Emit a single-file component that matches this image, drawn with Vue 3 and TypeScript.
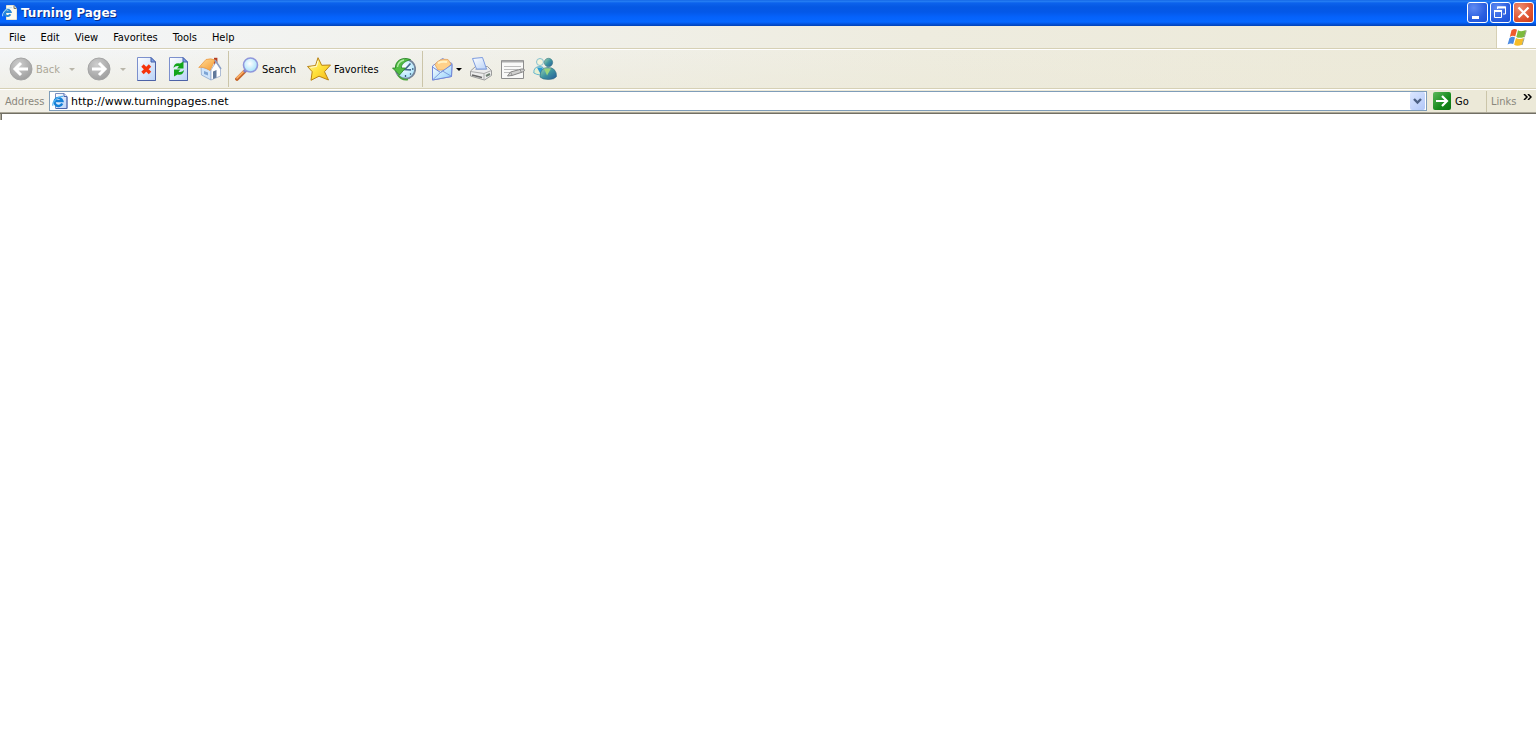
<script setup lang="ts">
import { ref } from 'vue'

const menus: string[] = ['File', 'Edit', 'View', 'Favorites', 'Tools', 'Help']
const address = ref<string>('http://www.turningpages.net')
</script>

<template>
  <div class="window">
    <svg class="defs" aria-hidden="true">
      <defs>
        <linearGradient id="paper" x1="0" y1="0" x2="1" y2="1">
          <stop offset="0" stop-color="#ffffff" /><stop offset="1" stop-color="#b9d2f7" />
        </linearGradient>
        <radialGradient id="disc" cx=".4" cy=".3" r=".75">
          <stop offset="0" stop-color="#cecece" /><stop offset="1" stop-color="#9c9c9c" />
        </radialGradient>
        <linearGradient id="roof" x1="0" y1="0" x2="1" y2="1">
          <stop offset="0" stop-color="#ffdc98" /><stop offset="1" stop-color="#f59a32" />
        </linearGradient>
        <radialGradient id="lens" cx=".45" cy=".4" r=".6">
          <stop offset="0" stop-color="#ffffff" /><stop offset="1" stop-color="#a5e2fb" />
        </radialGradient>
        <linearGradient id="gold" x1="0" y1="0" x2="1" y2="1">
          <stop offset="0" stop-color="#fffbb0" /><stop offset=".5" stop-color="#ffe23c" /><stop offset="1" stop-color="#f5b51a" />
        </linearGradient>
        <linearGradient id="teal" x1="0" y1="0" x2="1" y2="1">
          <stop offset="0" stop-color="#9fd6b0" /><stop offset=".5" stop-color="#3e94a0" /><stop offset="1" stop-color="#25599b" />
        </linearGradient>
        <linearGradient id="envelope" x1="0" y1="0" x2="1" y2="1">
          <stop offset="0" stop-color="#ffffff" /><stop offset="1" stop-color="#8fd0fb" />
        </linearGradient>
        <symbol id="ie" viewBox="0 0 16 16">
          <path d="M3.500.5h8.500l3 3v12H3.500z" fill="url(#paper)" stroke="#7a8fc0" />
          <path d="M12 .5v3h3" fill="#dce6fa" stroke="#4d66ae" />
          <path d="M15 4v11.500H4" fill="none" stroke="#4d66ae" />
          <path d="M10.200 10.500a4 4 0 1 1 .2-2.400H4" fill="none" stroke="#1681d8" stroke-width="2.400" />
          <path d="M1 12.700C-.5 9.200 6.300 2.600 11.300 3.500" fill="none" stroke="#58b4f0" stroke-width="1.200" />
        </symbol>
      </defs>
    </svg>

    <header class="title-bar">
      <svg class="app-icon" viewBox="0 0 16 16" aria-hidden="true">
        <path d="M4.500.5H12l2.500 3v11h-10z" fill="#fbfaf1" stroke="#e4e3d4" />
        <path d="M12 .5v3h2.500" fill="#dcd9c8" stroke="#77776a" />
        <path d="M8.400 9.300a3.200 3.200 0 1 1 .3-2.300H3" fill="none" stroke="#2a8ad8" stroke-width="2" />
        <path d="M.8 11.300C-.5 8 4.500 2.500 9.800 2.500" fill="none" stroke="#b8e3ff" />
      </svg>
      <h1>Turning Pages</h1>
      <div class="window-buttons">
        <button class="caption" type="button" aria-label="Minimize">
          <svg viewBox="0 0 21 21"><path d="M5 15.500h7" stroke="#fff" stroke-width="3" /></svg>
        </button>
        <button class="caption" type="button" aria-label="Restore">
          <svg viewBox="0 0 21 21" fill="none" stroke="#fff">
            <path d="M7.500 7V5h8v7H13" /><path d="M7 5.500h9" stroke-width="2" />
            <path d="M4.500 9.500h7v6h-7z" /><path d="M4 9h8" stroke-width="2" />
          </svg>
        </button>
        <button class="caption close" type="button" aria-label="Close">
          <svg viewBox="0 0 21 21"><path d="m5.500 5.500 10 10m0-10-10 10" stroke="#fff" stroke-width="2.200" /></svg>
        </button>
      </div>
    </header>

    <nav class="menu-bar" aria-label="Menu">
      <div class="menus">
        <button v-for="menu in menus" :key="menu" type="button">{{ menu }}</button>
      </div>
      <div class="flag-box">
        <svg class="flag" viewBox="0 0 20 19" aria-hidden="true">
          <path d="M4.500 2.300Q7.500.2 10 1.800L8.200 8.400Q5.600 7 2.800 8.900z" fill="#ef5a2c" />
          <path d="M11 2.300q3 2 8-.2l-2 6.800q-4.500 1.900-7.700 0z" fill="#7dba3c" />
          <path d="M2.500 9.900Q5.500 8 8 9.400L6.200 16Q3.600 14.600.6 16.500z" fill="#4a8ae2" />
          <path d="M9 10q3.200 2 7.700.1l-1.900 6.700q-4.500 2-7.700-.1z" fill="#f7bd28" />
          <path d="m19.300 2.500-2 6.800m-.2 1-2 6.700" fill="none" stroke="#5d6a45" stroke-width=".6" />
        </svg>
      </div>
    </nav>

    <div class="toolbar" role="toolbar" aria-label="Standard buttons">
      <button class="tool back muted" type="button">
        <svg class="icon" viewBox="0 0 24 24" aria-hidden="true">
          <circle cx="12" cy="12" r="11" fill="url(#disc)" stroke="#a5a5a5" />
          <path d="M19 12H6m6-6-6 6 6 6" fill="none" stroke="#fff" stroke-width="3" />
        </svg>
        <span>Back</span><i class="caret"></i>
      </button>
      <button class="tool forward muted" type="button" aria-label="Forward">
        <svg class="icon" viewBox="0 0 24 24" aria-hidden="true">
          <circle cx="12" cy="12" r="11" fill="url(#disc)" stroke="#a5a5a5" />
          <path d="M5 12h13m-6-6 6 6-6 6" fill="none" stroke="#fff" stroke-width="3" />
        </svg>
        <i class="caret"></i>
      </button>
      <button class="tool single" type="button" aria-label="Stop">
        <svg class="icon" viewBox="0 0 24 24" aria-hidden="true">
          <path d="M3.500.5H17l4.500 4.500v18.500h-18z" fill="url(#paper)" stroke="#7c90cd" />
          <path d="M17 .5V5h4.500z" fill="#7da2ea" stroke="#4660a8" />
          <path d="M21.500 5v18.500h-18" fill="none" stroke="#4c62a6" />
          <path d="m8.500 8.500 7.500 7.500m0-7.500-7.500 7.500" stroke="#f5330b" stroke-width="3.400" />
        </svg>
      </button>
      <button class="tool single" type="button" aria-label="Refresh">
        <svg class="icon" viewBox="0 0 24 24" aria-hidden="true">
          <path d="M3.500.5H17l4.500 4.500v18.500h-18z" fill="url(#paper)" stroke="#7c90cd" />
          <path d="M17 .5V5h4.500z" fill="#7da2ea" stroke="#4660a8" />
          <path d="M21.500 5v18.500h-18" fill="none" stroke="#4c62a6" />
          <path d="M7.500 11Q8 5.300 14 6.500L17.500 4.500V11.500H11L13 9.300Q9.500 8.500 7.500 11z" fill="#12a51b" />
          <path d="M18 13Q17.500 18.700 11.500 17.500L8 19.500V12.500H14.500L12.500 14.700Q16 15.500 18 13z" fill="#12a51b" />
        </svg>
      </button>
      <button class="tool home" type="button" aria-label="Home">
        <svg class="icon" viewBox="0 0 24 24" aria-hidden="true">
          <path d="M16 .8h3.400v7H16z" fill="#b43c22" />
          <path d="m3 10 10 3v10l-9.500-5z" fill="#cfe4fa" stroke="#8ca7cf" stroke-width=".8" />
          <path d="m13 13 5-8 4.500 6v8L13 23z" fill="#fff" stroke="#9aaccb" stroke-width=".8" />
          <path d="m15 14.500 3.500-1.500v7.500L15 22z" fill="#61799b" /><path d="m6 14 4 1.500v3L6 17z" fill="#7da4d4" />
          <path d="M.8 10.500 8 2.500Q13 1 17 3l-5 10.500Q5 9 .8 10.500z" fill="url(#roof)" stroke="#eb9a46" stroke-width=".8" />
          <path d="m17 3 6 9" fill="none" stroke="#8ba0c6" stroke-width="1.500" />
        </svg>
      </button>
      <span class="separator"></span>
      <button class="tool search" type="button">
        <svg class="icon" viewBox="0 0 24 24" aria-hidden="true">
          <path d="m10 14-8 8" stroke="#c5662c" stroke-width="3.800" stroke-linecap="round" />
          <path d="m9 14-7 7" stroke="#ffb266" stroke-width="1.700" stroke-linecap="round" />
          <path d="m11 13-2 2" stroke="#7f82cb" stroke-width="3" />
          <circle cx="15.500" cy="8" r="7" fill="url(#lens)" stroke="#9097db" stroke-width="1.600" />
        </svg>
        <span>Search</span>
      </button>
      <button class="tool favorites" type="button">
        <svg class="icon" viewBox="0 0 24 24" aria-hidden="true">
          <path d="M11 .7 14.700 8.300 23.500 8l-6 6.700L21.500 23 12 19.200 4 23.300 5.200 14.700.5 9.500l8-1z" fill="url(#gold)" stroke="#b98316" stroke-linejoin="round" />
          <path d="m11 4-1.500 5.500-6 .8" fill="none" stroke="#fffddb" />
        </svg>
        <span>Favorites</span>
      </button>
      <button class="tool history" type="button" aria-label="History">
        <svg class="icon" viewBox="0 0 24 24" aria-hidden="true">
          <circle cx="13.500" cy="12" r="9.700" fill="url(#lens)" stroke="#76859a" stroke-width="1.800" />
          <path d="M20 12h1.500M13.500 18v2M18 16.500l1 1" fill="none" stroke="#3a5979" stroke-width="1.300" />
          <path d="m18.500 6.500-5.500 6 6 .3" fill="none" stroke="#456a90" stroke-width="1.700" />
          <path d="M18.500 2.500C10-.8 3 4 3.500 11H.5l7 7 6-7H9.500c-.5-4 3-6.500 9-8.500z" fill="#51bd44" stroke="#268422" stroke-width=".8" />
          <path d="M5.500 10Q6 4.500 12 3" fill="none" stroke="#b4eaa6" stroke-width="1.300" />
          <path d="M6 18q3.500 5.500 10 4.500" fill="none" stroke="#4ba63c" stroke-width="1.500" />
        </svg>
      </button>
      <span class="separator wide"></span>
      <button class="tool mail" type="button" aria-label="Mail">
        <svg class="icon" viewBox="0 0 24 24" aria-hidden="true">
          <path d="m2.500 9 10-7.500L22 6.500l-.5 13-19 3.500z" fill="url(#envelope)" stroke="#7388d8" stroke-linejoin="round" />
          <path d="M5 7.500Q9 1 18 2.500l3 4.500-5 6H8z" fill="#ffd18a" stroke="#e4a35f" stroke-width=".8" />
          <path d="M8 6q4-2 9-1" fill="none" stroke="#fff2c4" stroke-width="2" />
          <path d="m2.500 10 8 5.500L22 7.500l-.5 12-19 3.500z" fill="url(#envelope)" stroke="#7388d8" stroke-linejoin="round" />
          <path d="m3 22.500 7.500-7 2-1.500 8.500 5" fill="none" stroke="#7f9ddd" />
        </svg>
        <i class="caret dark"></i>
      </button>
      <button class="tool single" type="button" aria-label="Print">
        <svg class="icon" viewBox="0 0 24 24" aria-hidden="true">
          <path d="m1.500 14 5-4.500h12l4 4v5l-7 4.500-14-4z" fill="#ececec" stroke="#9c9c9c" stroke-linejoin="round" />
          <path d="m6 13 2-2.500h9l1.500 2z" fill="#a8b8cf" />
          <path d="m3.500 1.500 10-1 4 11.500H7.500z" fill="url(#paper)" stroke="#7c9bdf" />
          <path d="m1.500 14.500 13.500 2 7.500-3M15 16.500V23" fill="none" stroke="#aaa" />
          <path d="m3 18 10 2.500" stroke="#666" stroke-width="1.500" />
          <path d="m17 19 4-2" stroke="#6f7f72" stroke-width="2" />
        </svg>
      </button>
      <button class="tool single" type="button" aria-label="Edit">
        <svg class="icon" viewBox="0 0 24 24" aria-hidden="true">
          <path d="M.5 3.500h22v18H.5z" fill="#f9f9f8" stroke="#8d8d8d" />
          <path d="M1 4.500h21" stroke="#ababab" stroke-width="2" />
          <path d="M3 9.500h17M3 12.500h14M3 15.500h8" stroke="#bcbcbc" />
          <path d="m6.500 19 3-4 11-3q3-.5 3 1.200 0 1-2 1.800L11 18.500z" fill="#d0d0cf" stroke="#858585" />
          <path d="m9.500 15 1.500 3m8-5.500 1.500 3" stroke="#929292" />
        </svg>
      </button>
      <button class="tool people" type="button" aria-label="Messenger">
        <svg class="icon" viewBox="0 0 24 24" aria-hidden="true">
          <circle cx="7" cy="5" r="3.500" fill="#f3f3dc" stroke="#85c1d0" />
          <path d="M.8 16Q.5 9.500 7 9.500q5 0 5 7-5 3-11.200-.5z" fill="#e6efd2" stroke="#68b8ce" />
          <path d="m4 10.500 3.500 6.500 2.500-6.500" fill="#299ad3" />
          <circle cx="15.500" cy="5.500" r="4.200" fill="url(#teal)" stroke="#407b85" stroke-width=".6" />
          <path d="M7 20q0-9.500 8-9.500 8.500 0 8.500 9-2 3-8 3T7 20z" fill="url(#teal)" stroke="#28647c" stroke-width=".6" />
          <path d="m11 11.500 3 7 4-7" fill="#9ad47c" />
        </svg>
      </button>
    </div>

    <form class="address-bar" @submit.prevent>
      <label for="address">Address</label>
      <div class="address-box">
        <svg class="page-icon" aria-hidden="true"><use href="#ie" /></svg>
        <input id="address" v-model="address" type="text" spellcheck="false" />
        <button class="drop" type="button" aria-label="Show addresses">
          <svg viewBox="0 0 15 18"><path d="m4 7 3.500 3.500L11 7" fill="none" stroke="#4d6185" stroke-width="2.400" /></svg>
        </button>
      </div>
      <button class="go" type="submit">
        <svg viewBox="0 0 18 18" aria-hidden="true"><path d="M3 9h11M9 4l5 5-5 5" fill="none" stroke="#fff" stroke-width="2.200" /></svg>
        <span>Go</span>
      </button>
      <div class="links">
        <span>Links</span>
        <button type="button" aria-label="More links">
          <svg viewBox="0 0 9 6"><path d="m1 0 3 3-3 3m4-6 3 3-3 3" fill="none" stroke="#000" stroke-width="1.500" /></svg>
        </button>
      </div>
    </form>

    <main class="page"></main>
  </div>
</template>

<style>
body {
  margin: 0;
  background: #fff;
}
</style>

<style scoped>
.window {
  min-height: 100vh;
  display: flex;
  flex-direction: column;
  font: 11px/14px "DejaVu Sans Condensed", "DejaVu Sans", sans-serif;
  color: #000;
}

.defs {
  position: absolute;
  width: 0;
  height: 0;
}

svg {
  display: block;
  flex: none;
}

button {
  margin: 0;
  padding: 0;
  border: 0;
  background: none;
  font: inherit;
  color: inherit;
}

.title-bar {
  display: flex;
  align-items: center;
  height: 26px;
  padding: 0 2px 1px;
  box-sizing: border-box;
  background: linear-gradient(#0a5be0 0, #2a83f4 1px, #0c62ec 3px, #0558e3 7px, #0458e8 12px, #0562fb 17px, #0668ff 22px, #0353dc 24px, #0242b4 26px);
}

.app-icon {
  width: 16px;
  height: 16px;
}

h1 {
  margin: 0 0 0 3px;
  padding-top: 1px;
  flex: 1;
  font: bold 12px/16px "DejaVu Sans", sans-serif;
  color: #fff;
  text-shadow: 1px 1px 0 #0b2d85;
}

.window-buttons {
  display: flex;
  gap: 2px;
}

.caption {
  width: 21px;
  height: 21px;
  box-sizing: border-box;
  border: 1px solid #fff;
  border-radius: 3px;
  background: radial-gradient(circle at 30% 25%, #5f8af2, #2b5fe0 60%, #1a50d6);
}

.caption svg {
  width: 21px;
  height: 21px;
  margin: -1px;
}

.close {
  background: radial-gradient(circle at 30% 25%, #eb8c70, #df5331 60%, #ca3d17);
}

.menu-bar {
  display: flex;
  height: 22px;
  border-bottom: 1px solid #d6d0b5;
  background: linear-gradient(90deg, #f4f6f8, #eeecdf 60%, #ece9d8);
}

.menus {
  display: flex;
  flex: 1;
  gap: 15px;
  padding: 1px 0 0 9px;
}

.flag-box {
  display: flex;
  align-items: center;
  justify-content: center;
  width: 39px;
  border-left: 1px solid #d6d0b5;
  background: #fff;
}

.flag {
  width: 20px;
  height: 19px;
}

.toolbar {
  display: flex;
  align-items: center;
  height: 38px;
  padding-left: 9px;
  border-top: 1px solid #fff;
  border-bottom: 1px solid #d6d0b5;
  background: linear-gradient(rgba(236, 233, 216, 0), rgba(236, 233, 216, .5)), linear-gradient(90deg, #f4f6f8, #eeecdf 60%, #ece9d8);
}

.tool {
  display: flex;
  align-items: center;
  gap: 3px;
  height: 36px;
  flex: none;
}

.tool span,
.go span,
.address-bar label,
.links span {
  padding-top: 1px;
}

.icon {
  width: 24px;
  height: 24px;
}

.muted {
  color: #aca899;
}

.back { width: 78px; }
.forward { width: 47px; }
.single { width: 32px; }
.home, .history { width: 30px; }
.search { width: 72px; }
.favorites { width: 85px; }
.mail { width: 39px; gap: 2px; }
.people { width: 24px; }

.caret {
  border: 3px solid transparent;
  border-top-color: #b9b6aa;
  border-bottom: 0;
}

.back .caret,
.forward .caret {
  margin-left: 6px;
}

.mail .dark {
  border-top-color: #000;
}

.separator {
  width: 6px;
  height: 36px;
  border-left: 1px solid #cbc5a9;
}

.wide {
  width: 7px;
}

.address-bar {
  display: flex;
  align-items: center;
  height: 22px;
  padding-left: 5px;
  border-top: 1px solid #fff;
  background: linear-gradient(90deg, #f2f0e8, #ece9d8 40%);
}

.address-bar label {
  width: 44px;
  color: #8a877c;
}

.address-box {
  display: flex;
  align-items: center;
  flex: 1;
  height: 20px;
  box-sizing: border-box;
  padding: 0 1px 0 2px;
  border: 1px solid #7f9db9;
  background: #fff;
}

.page-icon {
  width: 16px;
  height: 16px;
}

input {
  flex: 1;
  min-width: 0;
  padding: 2px 0 0 3px;
  border: 0;
  outline: 0;
  background: none;
  font: 11px/16px "DejaVu Sans", sans-serif;
  color: #000;
}

.drop {
  width: 15px;
  height: 18px;
  border-radius: 2px;
  background: linear-gradient(135deg, #dce7ff, #b1c7f8);
}

.drop svg {
  width: 15px;
  height: 18px;
}

.go {
  display: flex;
  align-items: center;
  gap: 4px;
  width: 53px;
  margin-left: 6px;
}

.go svg {
  width: 18px;
  height: 18px;
  border-radius: 2px;
  background: linear-gradient(135deg, #5cb85c, #16891b 60%, #0c7412);
}

.links {
  display: flex;
  width: 45px;
  padding: 3px 0 3px 4px;
  border-left: 1px solid #cbc5a9;
  color: #8a877c;
}

.links span {
  width: 32px;
}

.links button {
  align-self: flex-start;
}

.links svg {
  width: 9px;
  height: 6px;
}

.page {
  flex: 1;
  border-top: 1px solid #aca899;
  background:
    linear-gradient(#716f64, #716f64) 0 0 / 100% 1px no-repeat,
    linear-gradient(90deg, #aca899 1px, #716f64 1px) 0 0 / 2px 7px no-repeat,
    #fff;
}
</style>
